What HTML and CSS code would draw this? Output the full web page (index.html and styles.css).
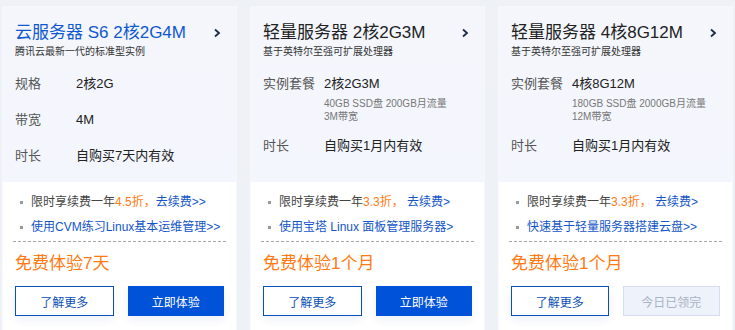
FILE: index.html
```html
<!DOCTYPE html>
<html lang="zh-CN">
<head>
    <meta charset="UTF-8">
    <meta name="viewport" content="width=device-width, initial-scale=1.0">
    <title>免费体验</title>
    <link rel="stylesheet" href="styles.css">
</head>
<body>
    <div class="cards">
        <div class="card">
            <div class="card-top">
                <div class="card-head">
                    <h2 class="title title-blue">云服务器 S6 2核2G4M</h2>
                    <svg class="chevron" width="8" height="10" viewBox="0 0 8 10"><polyline points="2,1.5 6,5 2,8.5" fill="none" stroke="#1c2a48" stroke-width="1.8"/></svg>
                </div>
                <p class="subtitle">腾讯云最新一代的标准型实例</p>
                <div class="specs">
                    <div class="spec"><span class="label">规格</span><span class="value">2核2G</span></div>
                    <div class="spec"><span class="label">带宽</span><span class="value">4M</span></div>
                    <div class="spec"><span class="label">时长</span><span class="value">自购买7天内有效</span></div>
                </div>
            </div>
            <div class="card-bottom">
                <ul class="tips">
                    <li>限时享续费一年<span class="hot">4.5折，</span><a href="#">去续费&gt;&gt;</a></li>
                    <li><a href="#">使用CVM练习Linux基本运维管理&gt;&gt;</a></li>
                </ul>
                <div class="free">免费体验7天</div>
                <div class="actions">
                    <a href="#" class="btn btn-line">了解更多</a>
                    <a href="#" class="btn btn-solid">立即体验</a>
                </div>
            </div>
        </div>

        <div class="card">
            <div class="card-top">
                <div class="card-head">
                    <h2 class="title">轻量服务器 2核2G3M</h2>
                    <svg class="chevron" width="8" height="10" viewBox="0 0 8 10"><polyline points="2,1.5 6,5 2,8.5" fill="none" stroke="#1c2a48" stroke-width="1.8"/></svg>
                </div>
                <p class="subtitle">基于英特尔至强可扩展处理器</p>
                <div class="specs">
                    <div class="spec">
                        <span class="label">实例套餐</span>
                        <div class="value">2核2G3M
                            <div class="detail">40GB SSD盘 200GB月流量<br>3M带宽</div>
                        </div>
                    </div>
                    <div class="spec"><span class="label">时长</span><span class="value">自购买1月内有效</span></div>
                </div>
            </div>
            <div class="card-bottom">
                <ul class="tips">
                    <li>限时享续费一年<span class="hot">3.3折，</span> <a href="#">去续费&gt;</a></li>
                    <li><a href="#">使用宝塔 Linux 面板管理服务器&gt;</a></li>
                </ul>
                <div class="free">免费体验1个月</div>
                <div class="actions">
                    <a href="#" class="btn btn-line">了解更多</a>
                    <a href="#" class="btn btn-solid">立即体验</a>
                </div>
            </div>
        </div>

        <div class="card">
            <div class="card-top">
                <div class="card-head">
                    <h2 class="title">轻量服务器 4核8G12M</h2>
                    <svg class="chevron" width="8" height="10" viewBox="0 0 8 10"><polyline points="2,1.5 6,5 2,8.5" fill="none" stroke="#1c2a48" stroke-width="1.8"/></svg>
                </div>
                <p class="subtitle">基于英特尔至强可扩展处理器</p>
                <div class="specs">
                    <div class="spec">
                        <span class="label">实例套餐</span>
                        <div class="value">4核8G12M
                            <div class="detail">180GB SSD盘 2000GB月流量<br>12M带宽</div>
                        </div>
                    </div>
                    <div class="spec"><span class="label">时长</span><span class="value">自购买1月内有效</span></div>
                </div>
            </div>
            <div class="card-bottom">
                <ul class="tips">
                    <li>限时享续费一年<span class="hot">3.3折，</span> <a href="#">去续费&gt;</a></li>
                    <li><a href="#">快速基于轻量服务器搭建云盘&gt;&gt;</a></li>
                </ul>
                <div class="free">免费体验1个月</div>
                <div class="actions">
                    <a href="#" class="btn btn-line">了解更多</a>
                    <span class="btn btn-off">今日已领完</span>
                </div>
            </div>
        </div>
    </div>
</body>
</html>
```

FILE: styles.css
```css
body {
    margin: 0;
    background-color: #eef1f5;
    font-family: "Liberation Sans", "Noto Sans CJK SC", sans-serif;
    color: #333;
}
.cards {
    display: grid;
    grid-template-columns: repeat(3, 233px);
    column-gap: 15px;
    padding: 7px 0 0 3px;
}
.card {
    background-color: #fff;
    box-shadow: 0 0 0 1px #f6f8fb;
}
.card-top {
    height: 175px;
    box-sizing: border-box;
    padding: 14px 12px 0 12px;
    background: linear-gradient(180deg, #f4f6fc 0%, #f3f6fc 100%);
}
.card-head {
    display: flex;
    align-items: center;
    justify-content: space-between;
    padding-right: 3px;
}
.title {
    margin: 0;
    font-size: 17px;
    line-height: 24px;
    font-weight: normal;
    color: #222;
}
.title-blue {
    color: #0f58d0;
}
.subtitle {
    margin: 0;
    font-size: 10px;
    line-height: 14px;
    color: #333;
}
.specs {
    display: flex;
    flex-direction: column;
    gap: 16px;
    margin-top: 15px;
}
.spec {
    display: flex;
    font-size: 13px;
    line-height: 20px;
}
.label {
    width: 61px;
    flex-shrink: 0;
    color: #555;
}
.value {
    color: #222;
}
.detail {
    margin: 3px 0 -3px;
    font-size: 10px;
    line-height: 13px;
    color: #777;
}
.card-bottom {
    padding: 10px 12px 24px 12px;
}
.tips {
    list-style: none;
    margin: 0 -2px;
    padding: 0 0 4px 2px;
    border-bottom: 1px dashed #a8a8a8;
    display: flex;
    flex-direction: column;
    gap: 5px;
}
.tips li {
    position: relative;
    padding-left: 16px;
    font-size: 12px;
    line-height: 20px;
    color: #444;
    white-space: nowrap;
}
.tips li::before {
    content: "";
    position: absolute;
    left: 5px;
    top: 9px;
    width: 3px;
    height: 3px;
    background-color: #999;
}
.tips a {
    color: #1456c8;
    text-decoration: none;
}
.hot {
    color: #ff7a12;
}
.free {
    margin-top: 10px;
    font-size: 17px;
    line-height: 24px;
    color: #ff7a12;
}
.actions {
    display: flex;
    gap: 14px;
    margin-top: 10px;
}
.btn {
    flex: 1;
    height: 30px;
    box-sizing: border-box;
    display: flex;
    align-items: center;
    justify-content: center;
    font-size: 12px;
    text-decoration: none;
    box-shadow: 0 4px 10px rgba(0, 60, 160, 0.07);
}
.btn-line {
    border: 1px solid #0a4fb8;
    color: #0a4fb8;
    background-color: #fff;
}
.btn-solid {
    background-color: #0052d9;
    color: #fff;
}
.btn-off {
    background-color: #eef2fb;
    border: 1px solid #d5ddef;
    color: #aab3c4;
    box-shadow: none;
}
```
